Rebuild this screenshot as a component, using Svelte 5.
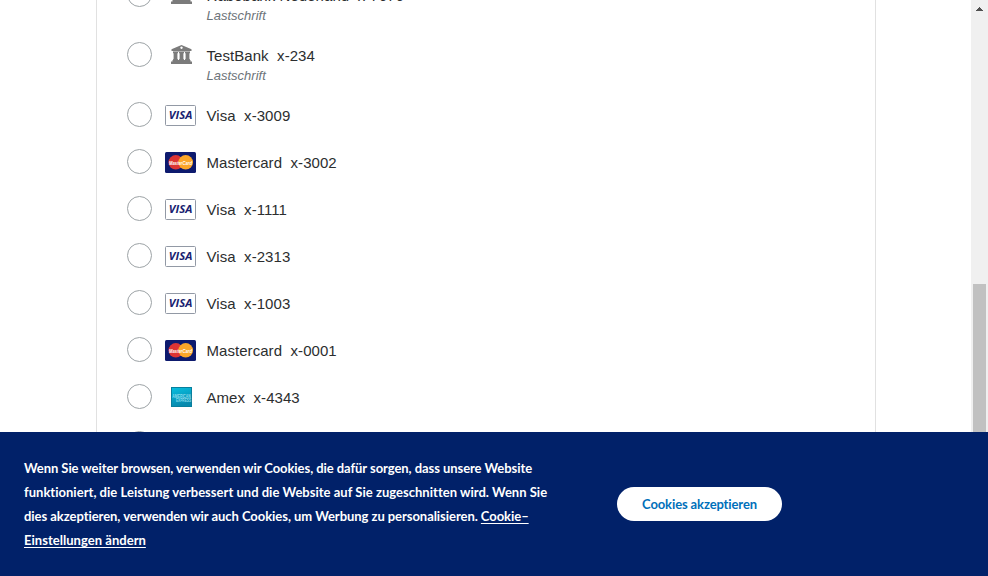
<script>
  const methods = [
    { kind: 'bank', name: 'Rabobank Nederland', number: 'x-7676', note: 'Lastschrift' },
    { kind: 'bank', name: 'TestBank', number: 'x-234', note: 'Lastschrift' },
    { kind: 'visa', name: 'Visa', number: 'x-3009' },
    { kind: 'mc', name: 'Mastercard', number: 'x-3002' },
    { kind: 'visa', name: 'Visa', number: 'x-1111' },
    { kind: 'visa', name: 'Visa', number: 'x-2313' },
    { kind: 'visa', name: 'Visa', number: 'x-1003' },
    { kind: 'mc', name: 'Mastercard', number: 'x-0001' },
    { kind: 'amex', name: 'Amex', number: 'x-4343' },
    { kind: 'visa', name: 'Visa', number: 'x-5454' }
  ];
</script>

<div class="page">
  <div class="view">
    <main class="content">
      <section class="card">
        <div class="list">
          {#each methods as m}
            <div class="row" class:tall={m.note}>
              <span class="radio"></span>
              <span class="icon">
                {#if m.kind === 'bank'}
                  <svg width="31" height="21" viewBox="0 0 31 21">
                    <g fill="#7b7b7b">
                      <path fill-rule="evenodd" d="M16.5 0 L26.5 4.200 V6 H6.500 V4.200Z M16.5 1.500a1.200 1.200 0 1 0 .01 0Z" />
                      <path d="M8 7h5v1l-.6.6v5.200l.6.6V15H8v-.6l.6-.6V8.600L8 8Z M14 7h5v1l-.6.6v5.200l.6.6V15h-5v-.6l.6-.6V8.600L14 8Z M20 7h5v1l-.6.6v5.200l.6.6V15h-5v-.6l.6-.6V8.600L20 8Z" />
                      <path d="M8 6h17v1H8Z" opacity=".6" />
                      <path d="M7.500 15h18v1.500h1.500V19H6v-2.500h1.500Z" />
                    </g>
                  </svg>
                {:else if m.kind === 'visa'}
                  <svg width="31" height="21" viewBox="0 0 31 21">
                    <rect x=".5" y=".5" width="30" height="20" rx="1" fill="#fff" stroke="#9299a5" />
                    <text class="visa" x="3.800" y="14.300" textLength="23.500" lengthAdjust="spacingAndGlyphs">VISA</text>
                  </svg>
                {:else if m.kind === 'mc'}
                  <svg width="31" height="21" viewBox="0 0 31 21">
                    <rect width="31" height="21" rx="1.500" fill="#0d1a6e" />
                    <circle cx="10.800" cy="10.300" r="7.300" fill="#dc3434" />
                    <circle cx="20.700" cy="10.300" r="7.300" fill="#fba629" />
                    <text class="mc" x="4" y="12.500" textLength="23" lengthAdjust="spacingAndGlyphs">MasterCard</text>
                  </svg>
                {:else}
                  <svg width="31" height="21" viewBox="0 0 31 21">
                    <defs>
                      <linearGradient id="amexBlue" x1="0" y1="0" x2=".3" y2="1">
                        <stop offset="0" stop-color="#08bfe0" />
                        <stop offset="1" stop-color="#0789ad" />
                      </linearGradient>
                    </defs>
                    <rect x="6.500" y=".5" width="20" height="19" fill="url(#amexBlue)" stroke="#087f9d" />
                    <text class="amex" x="7.300" y="10.800" textLength="18.500" lengthAdjust="spacingAndGlyphs">AMERICAN</text>
                    <text class="amex" x="11" y="14.800" textLength="15" lengthAdjust="spacingAndGlyphs">EXPRESS</text>
                  </svg>
                {/if}
              </span>
              <span class="label">
                <span class="title"><span>{m.name}</span><span>{m.number}</span></span>
                {#if m.note}<em>{m.note}</em>{/if}
              </span>
            </div>
          {/each}
        </div>
      </section>
    </main>
    <div class="scrollbar">
      <svg width="17" height="17" viewBox="0 0 17 17" shape-rendering="crispEdges">
        <path d="M8 7h1v1h1v1h1v1h1v1H5v-1h1V9h1V8h1z" fill="#505050" />
      </svg>
      <div class="thumb"></div>
    </div>
  </div>
  <footer class="banner">
    <p>
      <span class="l1">Wenn Sie weiter browsen, verwenden wir Cookies, die dafür sorgen, dass unsere Website</span>
      <span class="l2">funktioniert, die Leistung verbessert und die Website auf Sie zugeschnitten wird. Wenn Sie</span>
      <span class="l3">dies akzeptieren, verwenden wir auch Cookies, um Werbung zu personalisieren. <u>Cookie–</u></span>
      <span class="l4"><u>Einstellungen ändern</u></span>
    </p>
    <button>Cookies akzeptieren</button>
  </footer>
</div>

<style>
  :global(body) { margin: 0; overflow: hidden; }
  .page {
    display: flex;
    flex-direction: column;
    width: 988px;
    height: 576px;
    overflow: hidden;
    background: #fff;
    font-family: "Liberation Sans", Arial, sans-serif;
  }
  .view { display: flex; height: 432px; overflow: hidden; }
  .content { flex: 1; display: flex; padding-left: 96px; }
  .card {
    box-sizing: border-box;
    width: 780px;
    height: 432px;
    overflow: hidden;
    border: solid #e1e1e1;
    border-width: 0 1px;
    padding-left: 30px;
  }
  .list { margin-top: -29px; }
  .row { display: flex; box-sizing: border-box; height: 47px; padding-top: 11px; }
  .tall { height: 60px; }
  .radio {
    box-sizing: border-box;
    width: 25px;
    height: 25px;
    border: 1px solid #9da3a6;
    border-radius: 50%;
  }
  .icon { width: 31px; margin: 3px 10.500px 0 13px; }
  .icon svg { display: block; overflow: visible; }
  .label { color: #2c2e2f; font-size: 15px; line-height: 20px; padding-top: 4px; }
  .title { display: flex; gap: 8.500px; white-space: nowrap; letter-spacing: .05px; }
  em { display: block; font-size: 13px; line-height: 20px; color: #6c7378; }
  .visa { font: italic 700 11px "Open Sans", sans-serif; fill: #1a1f71; }
  .mc { font: italic 700 5.500px "Liberation Sans", sans-serif; fill: #fff; }
  .amex { font: 700 4.800px "Liberation Sans", sans-serif; fill: #8bdcec; }
  .scrollbar { width: 17px; background: #f0f0f0; }
  .scrollbar svg { display: block; }
  .thumb { width: 13px; height: 160px; margin: 267px 0 0 2px; background: #c1c1c1; }
  .banner {
    display: flex;
    align-items: flex-start;
    box-sizing: border-box;
    height: 144px;
    padding: 24px 24px 0;
    background: #012169;
    color: #fff;
    font: 700 13px/24px Lato, sans-serif;
    font-variant-ligatures: none;
  }
  p { width: 593px; margin: 0; }
  p span { display: block; white-space: nowrap; }
  .l1 { letter-spacing: -.06px; }
  .l2 { letter-spacing: .02px; }
  .l3 { letter-spacing: -.05px; }
  .l4 { letter-spacing: .03px; }
  u { text-underline-offset: 2px; }
  button {
    width: 165px;
    height: 34px;
    margin-top: 31px;
    padding: 0;
    border: 0;
    border-radius: 17px;
    background: #fff;
    color: #0070ba;
    font: 700 13px/34px Lato, sans-serif;
    font-variant-ligatures: none;
    letter-spacing: -.12px;
  }
</style>
